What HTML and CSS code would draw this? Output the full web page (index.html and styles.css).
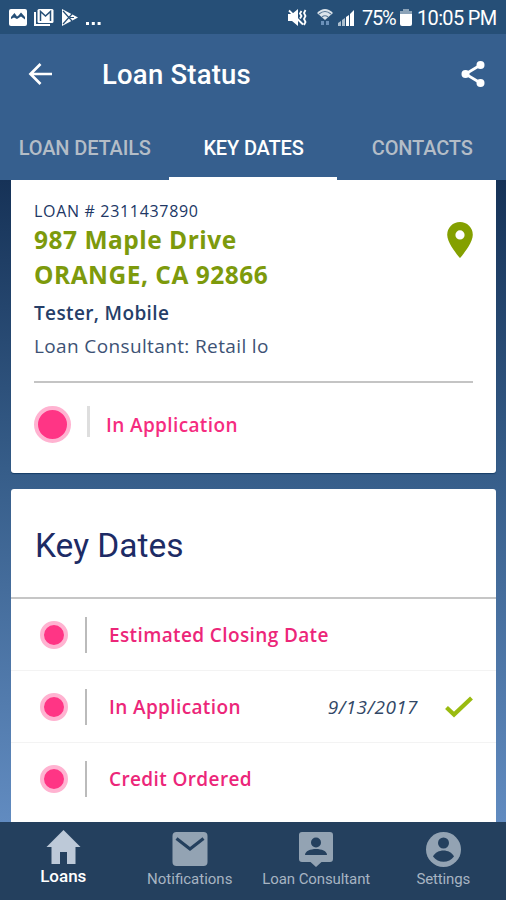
FILE: index.html
```html
<!DOCTYPE html>
<html lang="en">
<head>
<meta charset="utf-8">
<title>Loan Status</title>
<link rel="stylesheet" href="styles.css">
</head>
<body>
<header class="statusbar">
  <svg class="notices" viewBox="0 0 104 34">
    <rect x="9" y="9" width="18" height="17" rx="2" fill="#fff"/>
    <path fill="#264f77" d="M11 20.500V17l3.500-4 2.500 3.500 1.500-1 2.500-3 4 4.500v3.500l-1.500 1.500H12.500z"/>
    <path fill="#fff" d="M11 22v-3l3-1.500 3 1.500 4-2.500 4 3V22z"/>
    <path fill="none" stroke="#fff" stroke-width="2" d="M35 12v13h15"/>
    <rect x="37.500" y="9" width="16" height="14" rx="1.500" fill="#fff"/>
    <path fill="none" stroke="#264f77" stroke-width="1.500" d="M40.500 21v-9.500l5 4.500 5-4.500V21"/>
    <path fill="#fff" d="M62 9l16 8.500L62 26z"/>
    <path fill="none" stroke="#264f77" stroke-width="1.200" d="M63 11l9 10M63 24l9-10M70 17.500h4"/>
    <path fill="#fff" d="M86 22h3v3h-3zm5.800 0h3v3h-3zm5.800 0h3v3h-3z"/>
  </svg>
  <div class="indicators">
    <svg class="signals" viewBox="0 0 72 34">
      <path fill="#fff" d="M2 14h4l6-5v17l-6-5H2z"/>
      <path fill="none" stroke="#fff" stroke-width="1.800" d="M3 10.500l14 14M15.500 11l-1.500 2.500 1.500 2.500-1.500 2.500M19.500 10l-1.500 3 1.500 3-1.500 3 1.500 3-1.500 3"/>
      <path fill="#dce4eb" d="M31 13q8-8 16 0l-8 7z"/>
      <path fill="none" stroke="#587796" stroke-width="1.200" d="M33 14q6-5 12 0M36 17q3-2.500 6 0"/>
      <path fill="#6c91b9" d="M35 21h3v4h-3zm5 0h3v4h-3z"/>
      <path fill="#adbfce" d="M52 23l3-2v5h-3zm4-3l3-2v8h-3z"/>
      <path fill="#fff" d="M60 17l3-2v11h-3zm4-3l4-4v16h-4z"/>
    </svg>
    <span class="percent">75%</span>
    <svg class="battery" viewBox="0 0 12 34"><path fill="#8ca3b8" d="M3 9h6v2h3v4H0v-4h3z"/><path fill="#fff" d="M0 14h12v10a2 2 0 0 1-2 2H2a2 2 0 0 1-2-2z"/></svg>
    <span class="clock">10:05 PM</span>
  </div>
</header>
<div class="appbar">
  <svg class="back" viewBox="0 0 24 24"><path fill="none" stroke="#fff" stroke-width="2.700" d="M12.500 2L2.500 12l10 10M2.500 12H24"/></svg>
  <h1 class="title">Loan Status</h1>
  <svg class="share" viewBox="0 0 24 28"><path fill="none" stroke="#fff" stroke-width="2.700" d="M19.500 5L4.500 14l15 9"/><g fill="#fff"><circle cx="19.500" cy="5" r="4"/><circle cx="4.500" cy="14" r="4"/><circle cx="19.500" cy="23" r="4"/></g></svg>
</div>
<nav class="tabs">
  <a class="tab"><span>LOAN DETAILS</span></a>
  <a class="tab active"><span>KEY DATES</span></a>
  <a class="tab"><span>CONTACTS</span></a>
</nav>
<main class="content">
  <section class="card summary">
    <div class="property">
      <div class="details">
        <div class="loan-no"><span>LOAN # 2311437890</span></div>
        <div class="address"><span>987 Maple Drive</span><br><span>ORANGE, CA 92866</span></div>
        <div class="borrower"><span>Tester, Mobile</span></div>
        <div class="consultant"><span>Loan Consultant: Retail lo</span></div>
      </div>
      <svg class="pin" viewBox="0 0 26 36"><path fill="#84a000" fill-rule="evenodd" d="M13 0A12.800 12.800 0 0 0 .2 12.800C.2 22 13 36 13 36s12.800-14 12.800-23.200A12.800 12.800 0 0 0 13 0zm0 8.300a4.600 4.600 0 1 1 0 9.200 4.600 4.600 0 0 1 0-9.200z"/></svg>
    </div>
    <div class="stage"><i class="dot large"></i><i class="bar"></i><span class="label">In Application</span></div>
  </section>
  <section class="card dates">
    <h2 class="heading"><span>Key Dates</span></h2>
    <div class="row"><i class="dot"></i><i class="rule"></i><span class="label">Estimated Closing Date</span></div>
    <div class="row"><i class="dot"></i><i class="rule"></i><span class="label">In Application</span><span class="date">9/13/2017</span><svg class="check" viewBox="0 0 28 22"><path fill="none" stroke="#9abb10" stroke-width="4.200" d="M1.500 11.500l7.500 7L26.500 2"/></svg></div>
    <div class="row"><i class="dot"></i><i class="rule"></i><span class="label">Credit Ordered</span></div>
  </section>
</main>
<nav class="bottomnav">
  <a class="item active"><svg viewBox="0 0 36 36"><path fill="#bdc9d8" d="M18.500 1l17 17h-5v17h-8.500V23h-7v12H6.500V18h-5z"/></svg><span>Loans</span></a>
  <a class="item"><svg viewBox="0 0 36 36"><rect x=".5" y="1" width="35" height="34" rx="4" fill="#93a3b3"/><path fill="none" stroke="#24405e" stroke-width="3.200" d="M4.500 7.500L18 18 31.500 7.500"/></svg><span>Notifications</span></a>
  <a class="item"><svg viewBox="0 0 36 36"><path fill="#93a3b3" d="M4 1h28a3 3 0 0 1 3 3v24a3 3 0 0 1-3 3h-8.500L18 36l-5.500-5H4a3 3 0 0 1-3-3V4a3 3 0 0 1 3-3z"/><circle cx="18" cy="11.500" r="5" fill="#24405e"/><path fill="#24405e" d="M7 24c0-8 22-8 22 0z"/></svg><span class="n-consult">Loan Consultant</span></a>
  <a class="item"><svg viewBox="0 0 36 36"><circle cx="18.500" cy="18.500" r="17.500" fill="#93a3b3"/><circle cx="18.500" cy="12" r="5.500" fill="#24405e"/><path fill="#24405e" d="M8 25.500c4-8 17-8 21 0-5 7-16 7-21 0z"/></svg><span class="n-settings">Settings</span></a>
</nav>
</body>
</html>
```

FILE: styles.css
```css
* { box-sizing: border-box; }
body {
  margin: 0;
  width: 506px;
  height: 900px;
  overflow: hidden;
  display: flex;
  flex-direction: column;
  font-family: "Open Sans", sans-serif;
  background: #365f8e;
}
svg { display: block; flex: none; }
span { white-space: nowrap; }

.statusbar {
  height: 34px;
  flex: none;
  display: flex;
  justify-content: space-between;
  background: #264f77;
  color: #fff;
  font: 20px/37px Roboto, sans-serif;
}
.notices { width: 104px; height: 34px; }
.indicators { display: flex; padding-right: 10px; }
.signals { width: 72px; height: 34px; margin-right: 4px; }
.percent { width: 38px; letter-spacing: -1.2px; }
.battery { width: 12px; height: 34px; margin-right: 5px; }
.clock { width: 79px; letter-spacing: -0.65px; }

.appbar {
  height: 80px;
  flex: none;
  display: flex;
  align-items: center;
  padding: 0 20px 0 28px;
}
.back { width: 24px; height: 24px; }
.title {
  margin: 2px 0 0 50px;
  flex: 1;
  color: #fff;
  font: 500 27.500px/36px Roboto, sans-serif;
  letter-spacing: 0.2px;
}
.share { width: 26px; height: 28px; }

.tabs { height: 66px; flex: none; display: flex; }
.tab {
  flex: 1;
  padding-left: 1px;
  text-align: center;
  color: #b4bdc7;
  font: 500 20px/68px Roboto, sans-serif;
  letter-spacing: -0.15px;
}
.tab.active { color: #fff; border-bottom: 3px solid #fff; }

.content {
  flex: 1;
  min-height: 0;
  overflow: hidden;
  padding: 0 10px 0 11px;
  background: linear-gradient(#163257, #365d89 45%, #618bc0);
}
.card { background: #fff; border-radius: 3px; }
.summary {
  height: 293px;
  padding: 21px 23px 0 23px;
  border-radius: 0 0 3px 3px;
  box-shadow: 0 1px 1px #173d66;
}
.property {
  height: 182px;
  display: flex;
  justify-content: space-between;
  border-bottom: 2px solid #c4c4c4;
  color: #263e68;
}
.loan-no { font-size: 16px; line-height: 20px; color: #213765; letter-spacing: 0.68px; }
.address { font-size: 24.500px; font-weight: 700; line-height: 35px; color: #7d9a0c; margin-top: 1px; letter-spacing: 0.5px; }
.borrower { font-size: 19px; font-weight: 600; line-height: 34px; margin-top: 4px; letter-spacing: 0.36px; }
.consultant { font-size: 19px; line-height: 34px; margin-top: -1px; letter-spacing: 0.37px; color: #3d5275; }
.pin { width: 26px; height: 36px; margin: 21px 0 0; }
.dot {
  flex: none;
  width: 28px;
  height: 28px;
  border: 4px solid #ffb3d1;
  border-radius: 50%;
  background: #ff3585;
}
.dot.large { width: 37px; height: 37px; }
.stage { height: 82px; display: flex; align-items: center; }
.bar { width: 3px; height: 31px; margin: 0 16px 5px 16px; background: #dedede; }
.label { color: #ec2679; font-size: 19px; font-weight: 600; letter-spacing: 0.38px; }
.stage .label { margin-top: 2px; color: #f52c7f; }

.dates { height: 340px; margin-top: 16px; }
.heading {
  margin: 0;
  height: 110px;
  padding-left: 24px;
  border-bottom: 2px solid #c6c6c6;
  color: #1d2b65;
  font: 400 33.500px/114px Roboto, sans-serif;
}
.row {
  height: 72px;
  padding: 0 23px 0 29px;
  display: flex;
  align-items: center;
  border-bottom: 1px solid #f3f3f3;
}
.row:last-child { border-bottom-color: #fff; }
.row .label { margin-top: 1px; }
.rule { width: 2px; height: 36px; margin: 0 22px 0 17px; background: #bbb; }
.date { margin-left: auto; color: #314766; font-size: 19px; font-style: italic; letter-spacing: 0.4px; }
.check { width: 28px; height: 22px; margin-left: 27px; }

.bottomnav {
  height: 78px;
  flex: none;
  display: flex;
  background: #24405e;
  color: #a7b4c2;
  font: 15px/20px Roboto, sans-serif;
}
.item {
  flex: 1;
  display: flex;
  flex-direction: column;
  align-items: center;
  padding-top: 9px;
}
.item svg { width: 36px; height: 36px; margin-bottom: 2px; }
.n-consult { letter-spacing: -0.1px; }
.n-settings { letter-spacing: -0.15px; padding-left: 1px; }
.item.active { color: #fff; font-size: 17px; font-weight: 500; padding-top: 7px; }
.item.active svg { margin-bottom: 1px; }
```
